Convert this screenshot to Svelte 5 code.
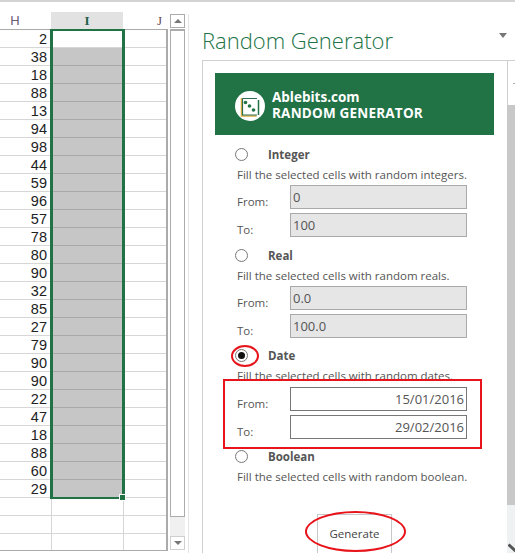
<script>
  const values = [2,38,18,88,13,94,98,44,59,96,57,78,80,90,32,85,27,79,90,90,22,47,18,88,60,29];
  const blanks = [0,1,2];
  const options = [
    { name: 'Integer', desc: 'Fill the selected cells with random integers.', from: '0', to: '100', kind: 'off' },
    { name: 'Real', desc: 'Fill the selected cells with random reals.', from: '0.0', to: '100.0', kind: 'off' },
    { name: 'Date', desc: 'Fill the selected cells with random dates.', from: '15/01/2016', to: '29/02/2016', kind: 'on' },
    { name: 'Boolean', desc: 'Fill the selected cells with random boolean.', kind: 'off' }
  ];
</script>

<div class="app">
  <div class="sheet">
    <div class="colhead">
      <span class="ch">H</span>
      <span class="ch active">I</span>
      <span class="ch j">J</span>
    </div>
    <div class="grid">
      {#each values as v, i}
        <div class="row">
          <div class="cell num">{v}</div>
          <div class="cell mid" class:fill={i > 0}></div>
          <div class="cell"></div>
        </div>
      {/each}
      {#each blanks as b}
        <div class="row" class:last={b === 2}>
          <div class="cell num"></div>
          <div class="cell mid"></div>
          <div class="cell"></div>
        </div>
      {/each}
      <div class="selection"><span class="handle"></span></div>
    </div>
  </div>

  <div class="vscroll">
    <div class="sbtn up"><i></i></div>
    <div class="thumb"></div>
    <div class="track"></div>
    <div class="sbtn down"><i></i></div>
  </div>

  <div class="panel">
    <div class="title-row">
      <h1>Random Generator</h1>
      <span class="caret"></span>
    </div>
    <div class="box">
      <div class="content">
        <div class="banner">
          <svg class="logo" width="30" height="30" viewBox="0 0 30 30">
            <circle cx="15" cy="15" r="15" fill="#fff"/>
            <path d="M6.5 7v18h15" fill="none" stroke="#e0b040" stroke-width="1.5"/>
            <path d="M7.5 7.5h14.5M7.5 7.5v16.5h14.5" fill="none" stroke="#2b6f50" stroke-width="1.2"/>
            <path d="M23.5 9v15" stroke="#217346" stroke-width="1.5"/>
            <circle cx="10.5" cy="11.5" r="1.8" fill="#217346"/>
            <circle cx="14.5" cy="15" r="1.8" fill="#217346"/>
            <circle cx="18.5" cy="19" r="1.8" fill="#217346"/>
          </svg>
          <div class="brand">
            <div>Ablebits.com</div>
            <div class="wide">RANDOM GENERATOR</div>
          </div>
        </div>

        {#each options as o}
          <section class="option {o.name.toLowerCase()}">
            <div class="head">
              <span class="radio" class:on={o.kind === 'on'}></span>
              <b>{o.name}</b>
            </div>
            <p>{o.desc}</p>
            {#if o.from}
              <div class="fields">
                <label for={o.name + 'f'}>From:</label>
                <input id={o.name + 'f'} class:date={o.kind === 'on'} value={o.from} readonly />
                <label for={o.name + 't'}>To:</label>
                <input id={o.name + 't'} class:date={o.kind === 'on'} value={o.to} readonly />
              </div>
            {/if}
          </section>
        {/each}

        <button class="generate">Generate</button>
      </div>
      <div class="pscroll">
        <div class="pup"></div>
        <div class="pthumb"></div>
        <div class="pdown">
          <svg width="8" height="10" viewBox="0 0 8 10"><path d="M0.5 1.5L7.5 8" stroke="#555" stroke-width="3" fill="none"/></svg>
        </div>
      </div>
    </div>
  </div>

  <span class="mark ell1"></span>
  <span class="mark rect"></span>
  <span class="mark ell2"></span>
</div>

<style>
  :global(body) { margin: 0; background: #fff; }
  .app {
    position: relative;
    width: 515px;
    height: 553px;
    overflow: hidden;
    background: #fff;
    display: flex;
    align-items: flex-start;
    font-family: "Open Sans", "Liberation Sans", sans-serif;
    color: #444;
    box-sizing: border-box;
    border-top: 2px solid #d4d4d4;
  }
  .sheet { width: 168px; flex: none; padding-top: 10px; }
  .colhead {
    display: grid;
    grid-template-columns: 51px 72px 43px;
    height: 17px;
    font: 13px "Liberation Sans", sans-serif;
    text-align: center;
    line-height: 17px;
  }
  .ch { color: #6a5a72; padding-right: 21px; }
  .active {
    padding: 0;
    background: #e2e2e2;
    color: #22604a;
    font-family: "Liberation Serif", serif;
    font-weight: 700;
    border-bottom: 1px solid #bbb;
    box-sizing: border-box;
  }
  .j { padding: 0 0 0 30px; font-family: "Liberation Serif", serif; color: #6a4a52; }
  .grid {
    position: relative;
    width: 166px;
    border-top: 1px solid #ababab;
    border-right: 2px solid #ababab;
  }
  .row {
    display: grid;
    grid-template-columns: 52px 72px 42px;
    height: 18px;
    box-sizing: border-box;
    border-bottom: 1px solid #d6d6d6;
  }
  .row.last { height: 17px; border-bottom-color: #ababab; }
  .cell { min-width: 0; }
  .num {
    font: 14.5px/18px "Liberation Sans", sans-serif;
    text-align: right;
    padding-right: 4px;
    color: #222;
    border-right: 1px solid #d6d6d6;
  }
  .mid { border-right: 1px solid #d6d6d6; }
  .fill { background: #c6c6c6; border-bottom: 1px solid #a8a8a8; height: 18px; box-sizing: border-box; }
  .selection {
    position: absolute;
    left: 50px;
    top: -1px;
    width: 75px;
    height: 470px;
    box-sizing: border-box;
    border: solid #217346;
    border-width: 2px 3px;
  }
  .handle {
    position: absolute;
    right: -4px;
    bottom: -4px;
    width: 5px;
    height: 5px;
    background: #217346;
    border: 1px solid #fff;
  }

  .vscroll {
    width: 15px;
    flex: none;
    margin: 12px 0 0 2px;
    display: flex;
    flex-direction: column;
  }
  .sbtn {
    height: 14px;
    border: 1px solid #ababab;
    box-sizing: border-box;
    display: flex;
    align-items: center;
    justify-content: center;
  }
  .sbtn.down { border-color: #d0d0d0; }
  .sbtn i { width: 0; height: 0; border: 4px solid transparent; }
  .up i { border-bottom: 4px solid #777; border-top: 0; }
  .down i { border-top: 4px solid #777; border-bottom: 0; }
  .thumb { height: 488px; border: 1px solid #ababab; border-top-width: 2px; box-sizing: border-box; margin-top: 1px; }
  .track { height: 19px; background: #f0f0f0; }

  .panel {
    width: 313px;
    flex: none;
    margin-left: 3px;
    padding-left: 13px;
    border-left: 1px solid #e4e4e4;
    height: 553px;
    margin-top: 12px;
  }
  .title-row { display: flex; justify-content: space-between; align-items: flex-start; height: 46px; width: 305px; }
  h1 {
    margin: 0;
    font-weight: 300;
    font-size: 22px;
    color: #217346;
    line-height: 28px;
    padding-top: 12px;
    white-space: nowrap;
  }
  .caret {
    width: 0; height: 0;
    border: 4.5px solid transparent;
    border-top: 5px solid #777;
    border-bottom: 0;
    margin-top: 19px;
  }
  .box {
    display: flex;
    border: 1px solid #d0d0d0;
    border-right: 0;
    border-bottom: 0;
    height: 500px;
    width: 313px;
    box-sizing: border-box;
  }
  .content { width: 304px; flex: none; padding: 12px 0 0 12px; box-sizing: border-box; position: relative; }
  .banner {
    width: 279px;
    height: 62px;
    background: #217346;
    display: flex;
    align-items: center;
    gap: 7px;
    padding-left: 20px;
    box-sizing: border-box;
  }
  .logo { flex: none; margin-top: 4px; }
  .brand { color: #fff; font-weight: 700; font-size: 13.5px; line-height: 16px; padding-top: 2px; white-space: nowrap; }
  .wide { letter-spacing: .2px; }

  .option { padding-left: 22px; font-size: 11.5px; }
  .head { display: flex; align-items: center; height: 18px; margin-left: -2px; }
  .option.integer { margin-top: 10px; }
  .option.real { margin-top: 9px; }
  .option.date { margin-top: 8px; }
  .option.boolean { margin-top: 8px; }
  .radio {
    width: 13px;
    height: 13px;
    box-sizing: border-box;
    border: 1px solid #777;
    border-radius: 50%;
    background: #fff;
    margin-right: 20px;
    flex: none;
    position: relative;
  }
  .radio.on::after {
    content: "";
    position: absolute;
    inset: 2px;
    border-radius: 50%;
    background: #111;
  }
  .head b { color: #555; font-size: 11.5px; font-weight: 700; }
  p { margin: 2px 0 0; line-height: 20px; color: #555; white-space: nowrap; }
  .fields {
    display: grid;
    grid-template-columns: 53px 177px;
    grid-auto-rows: 24px;
    row-gap: 4px;
  }
  .date .fields { padding-top: 1px; }
  label { align-self: end; line-height: 20px; margin-bottom: -3px; color: #555; font-size: 11.5px; }
  input {
    width: 177px;
    height: 24px;
    box-sizing: border-box;
    border: 1px solid #aaa;
    background: #e6e6e6;
    padding: 0 2px;
    font: 13px "Open Sans", sans-serif;
    color: #555;
    outline: 0;
  }
  input.date { background: #fff; border-color: #777; text-align: right; }
  .generate {
    display: block;
    width: 75px;
    height: 40px;
    margin: 27px 0 0 102px;
    box-sizing: border-box;
    background: #fff;
    border: 1px solid #c8c8c8;
    font: 11.5px "Open Sans", sans-serif;
    color: #444;
    padding: 0 0 2px;
  }

  .pscroll { width: 8px; flex: none; display: flex; flex-direction: column; border-left: 1px solid #d0d0d0; box-sizing: border-box; }
  .pup { height: 44px; background: #fff; position: relative; }
  .pup::after { content: ""; position: absolute; right: 0; top: 22px; width: 2px; height: 1px; background: #aaa; }
  .pthumb { height: 400px; background: #c8c8c8; margin-left: -1px; }
  .pdown { flex: 1; background: #eef2f2; margin-left: -1px; padding: 31px 0 0 1px; }

  .mark { position: absolute; box-sizing: border-box; pointer-events: none; }
  .ell1 { left: 231px; top: 343px; width: 28px; height: 22px; border: 2px solid #e8141c; border-radius: 50%; }
  .rect { left: 223px; top: 377px; width: 259px; height: 70px; border: 2px solid #e8141c; }
  .ell2 { left: 305px; top: 509px; width: 101px; height: 41px; border: 2px solid #e8141c; border-radius: 50%; }
</style>
